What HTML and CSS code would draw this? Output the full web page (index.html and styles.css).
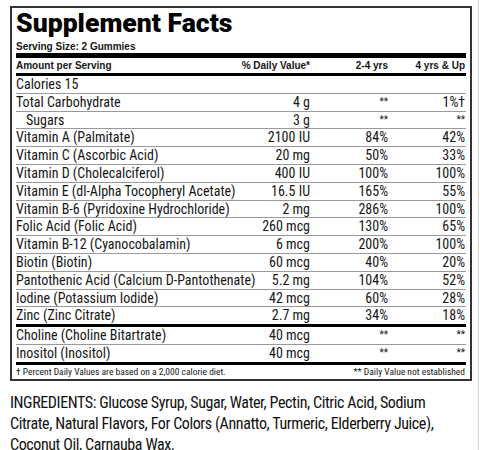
FILE: index.html
```html
<!DOCTYPE html>
<html lang="en">
<head>
    <meta charset="UTF-8">
    <title>Supplement Facts</title>
    <link rel="stylesheet" href="styles.css">
</head>
<body>
    <div class="page">
        <section class="facts">
            <h1 class="facts-title">Supplement Facts</h1>
            <div class="serving">Serving Size: 2 Gummies</div>

            <div class="row head">
                <span>Amount per Serving</span>
                <span class="num">% Daily Value*</span>
                <span class="num">2-4 yrs</span>
                <span class="num">4 yrs &amp; Up</span>
            </div>

            <div class="row"><span>Calories 15</span><span></span><span></span><span></span></div>
            <div class="row"><span>Total Carbohydrate</span><span class="num">4 g</span><span class="num star">**</span><span class="num">1%†</span></div>
            <div class="row"><span class="indent">Sugars</span><span class="num">3 g</span><span class="num star">**</span><span class="num star">**</span></div>
            <div class="row"><span>Vitamin A (Palmitate)</span><span class="num">2100 IU</span><span class="num">84%</span><span class="num">42%</span></div>
            <div class="row"><span>Vitamin C (Ascorbic Acid)</span><span class="num">20 mg</span><span class="num">50%</span><span class="num">33%</span></div>
            <div class="row"><span>Vitamin D (Cholecalciferol)</span><span class="num">400 IU</span><span class="num">100%</span><span class="num">100%</span></div>
            <div class="row"><span>Vitamin E (dl-Alpha Tocopheryl Acetate)</span><span class="num">16.5 IU</span><span class="num">165%</span><span class="num">55%</span></div>
            <div class="row"><span>Vitamin B-6 (Pyridoxine Hydrochloride)</span><span class="num">2 mg</span><span class="num">286%</span><span class="num">100%</span></div>
            <div class="row"><span>Folic Acid (Folic Acid)</span><span class="num">260 mcg</span><span class="num">130%</span><span class="num">65%</span></div>
            <div class="row"><span>Vitamin B-12 (Cyanocobalamin)</span><span class="num">6 mcg</span><span class="num">200%</span><span class="num">100%</span></div>
            <div class="row"><span>Biotin (Biotin)</span><span class="num">60 mcg</span><span class="num">40%</span><span class="num">20%</span></div>
            <div class="row"><span>Pantothenic Acid (Calcium D-Pantothenate)</span><span class="num">5.2 mg</span><span class="num">104%</span><span class="num">52%</span></div>
            <div class="row"><span>Iodine (Potassium Iodide)</span><span class="num">42 mcg</span><span class="num">60%</span><span class="num">28%</span></div>
            <div class="row end"><span>Zinc (Zinc Citrate)</span><span class="num">2.7 mg</span><span class="num">34%</span><span class="num">18%</span></div>

            <div class="row"><span>Choline (Choline Bitartrate)</span><span class="num">40 mcg</span><span class="num star">**</span><span class="num star">**</span></div>
            <div class="row end"><span>Inositol (Inositol)</span><span class="num">40 mcg</span><span class="num star">**</span><span class="num star">**</span></div>

            <div class="foot">
                <span>† Percent Daily Values are based on a 2,000 calorie diet.</span>
                <span>** Daily Value not established</span>
            </div>
        </section>

        <p class="ingredients">INGREDIENTS: Glucose Syrup, Sugar, Water, Pectin, Citric Acid, Sodium Citrate, Natural Flavors, For Colors (Annatto, Turmeric, Elderberry Juice), Coconut Oil, Carnauba Wax.</p>
    </div>
</body>
</html>
```

FILE: styles.css
```css
body {
    margin: 0;
    background: #fff;
    color: #161616;
    font-family: "Liberation Sans", Arial, sans-serif;
}
.page {
    width: 479px;
    min-height: 450px;
    box-sizing: border-box;
    border-right: 1px solid #d6d6d6; /* edge of the scanned label */
    padding: 6px 0 0 10px;
}
.facts {
    width: 462px;
    box-sizing: border-box;
    border: 2px solid #333;
    padding: 1px 4px 0;
}
.facts-title {
    margin: 0;
    font-family: Roboto, "Liberation Sans", sans-serif;
    font-size: 26.6px;
    line-height: 28px;
    font-weight: 900;
    color: #000;
}
.serving {
    padding-top: 3px;
    font-size: 10px;
    line-height: 13px;
    font-weight: bold;
    border-bottom: 5px solid #000;
}
.row {
    display: grid;
    grid-template-columns: minmax(0, 1fr) 72px 78px 77px;
    padding-right: 1px;
    height: 17.8px;
    box-sizing: border-box;
    border-bottom: 1px solid #9a9a9a;
    font-family: Roboto, "Liberation Sans", sans-serif;
    font-stretch: 75%;
    font-size: 14px;
    line-height: 16.8px;
    white-space: nowrap;
}
.row.end {
    height: 19.8px;
    border-bottom: 3px solid #000;
}
.row.head {
    height: 18px;
    border-bottom: 3px solid #000;
    font-family: "Liberation Sans", Arial, sans-serif;
    font-stretch: normal;
    font-size: 10px;
    font-weight: bold;
    line-height: 15px;
}
.num {
    text-align: right;
}
.star {
    font-size: 10px;
}
.indent {
    padding-left: 10px;
}
.foot {
    display: flex;
    justify-content: space-between;
    height: 14px;
    padding-right: 1px;
    font-family: Roboto, "Liberation Sans", sans-serif;
    font-stretch: 75%;
    font-size: 9.5px;
    line-height: 14px;
}
.ingredients {
    width: 460px;
    margin: 11px 0 0;
    font-family: Roboto, "Liberation Sans", sans-serif;
    font-stretch: 75%;
    font-size: 16px;
    letter-spacing: -0.4px;
    line-height: 21px;
    color: #111;
}
```
